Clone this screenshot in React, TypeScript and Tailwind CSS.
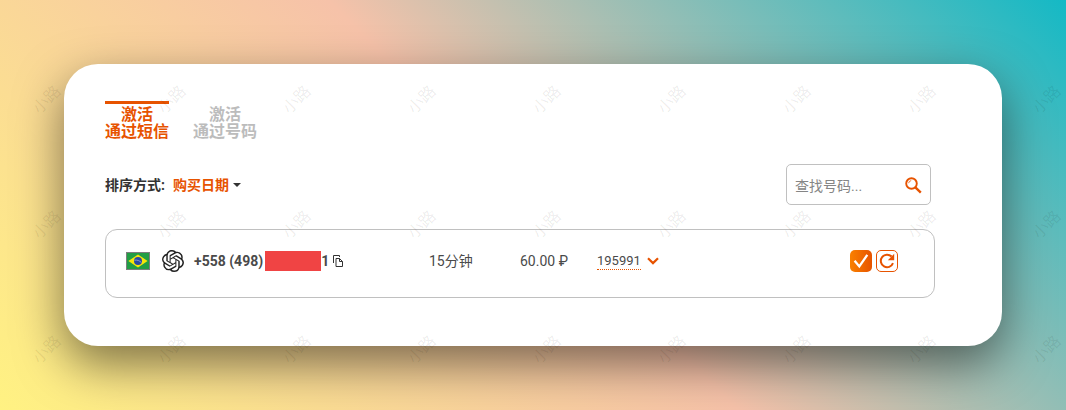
import { useState } from "react";
import { SiOpenai } from "react-icons/si";

const tabs = [
  { id: "sms", top: "激活", bottom: "通过短信" },
  { id: "number", top: "激活", bottom: "通过号码" },
];

const activations = [
  {
    id: "195991",
    prefix: "+558 (498)",
    suffix: "1",
    time: "15分钟",
    price: "60.00 ₽",
  },
];

const BrazilFlag = () => (
  <svg width="24" height="18" viewBox="0 0 24 18" role="img" aria-label="Brazil">
    <rect width="24" height="18" fill="#7d7d7d" />
    <rect x="1" y="1" width="22" height="16" fill="#229e45" />
    <path d="M12 2.6 21.6 9 12 15.4 2.4 9z" fill="#f8e509" />
    <circle cx="12" cy="9" r="4" fill="#2b49a3" />
    <path d="M8.4 8.2c2.8-.4 5.2.4 7 2.4" stroke="#a9bcdc" strokeWidth="0.7" fill="none" />
  </svg>
);

const SearchIcon = () => (
  <svg width="17" height="17" viewBox="0 0 17 17" fill="none" stroke="#e75300">
    <circle cx="6.5" cy="6.5" r="5.3" strokeWidth="1.9" />
    <path d="M3.6 6.2a3 3 0 0 1 2.6-2.6" strokeWidth="0.8" />
    <path d="m10.4 10.4 5.4 5.2" strokeWidth="2.4" />
  </svg>
);

const CopyIcon = () => (
  <svg width="10" height="12" viewBox="0 0 10 12" fill="none" stroke="#333" strokeWidth="1">
    <path d="M.5 8V.5h6V2" />
    <path d="M3 3.5h3.5l3 3v5H3z" />
    <path d="M6.5 3.5v3h3" />
  </svg>
);

const ChevronIcon = () => (
  <svg width="12" height="8" viewBox="0 0 12 8" fill="none" stroke="#e75300" strokeWidth="2.2">
    <path d="m1 1.2 5 4.9 5-4.9" />
  </svg>
);

const CheckIcon = () => (
  <svg width="22" height="22" viewBox="0 0 22 22" fill="none" stroke="#fff" strokeWidth="2.3">
    <path d="m4.6 10.8 4.7 5.6 8-11.6" />
  </svg>
);

const RefreshIcon = () => (
  <svg width="20" height="20" viewBox="0 0 20 20" fill="none">
    <path d="M16 12.2a6.3 6.3 0 1 1-1.4-6.7" stroke="#e75300" strokeWidth="2" />
    <path d="M17.2 2.8v6.4h-6.4z" fill="#e75300" />
  </svg>
);

// Repeated diagonal text over the whole page
const Watermark = () => (
  <div
    aria-hidden="true"
    className="pointer-events-none absolute inset-0 grid auto-rows-[125px] grid-cols-[repeat(9,125px)] overflow-hidden"
  >
    {Array.from({ length: 9 * 3 }, (_, i) => (
      <div key={i} className="pt-[88px] pl-[31px]">
        <span className="block w-8 -rotate-45 text-base whitespace-nowrap text-black/8">小路</span>
      </div>
    ))}
  </div>
);

const App = () => {
  const [activeTab, setActiveTab] = useState("sms");
  const [query, setQuery] = useState("");

  return (
    <div className="relative min-h-screen overflow-hidden bg-[linear-gradient(45deg,#fff282_0%,#f6c2a9_50%,#14b9c5_100%)] p-16 font-['Roboto','Noto_Sans_CJK_SC',sans-serif] text-sm text-[#4a4a4a]">
      <main className="rounded-[34px] bg-white pt-[37px] pr-[67px] pb-12 pl-[41px] shadow-[0_18px_48px_rgba(0,0,0,0.5)]">
        {/* Tabs */}
        <div className="flex gap-6">
          {tabs.map((tab) => (
            <button
              key={tab.id}
              onClick={() => setActiveTab(tab.id)}
              className={`border-t-3 pt-0.5 text-center text-base leading-[17px] font-bold ${
                activeTab === tab.id
                  ? "border-[#e75300] text-[#e75300]"
                  : "border-transparent text-[#bcbcbc]"
              }`}
            >
              {tab.top}
              <br />
              {tab.bottom}
            </button>
          ))}
        </div>

        {/* Sorting and search */}
        <div className="mt-6 flex items-center justify-between pr-1">
          <div className="flex items-center gap-2 font-bold">
            <label htmlFor="sort" className="text-[#333]">
              排序方式:
            </label>
            <div className="relative">
              <select id="sort" className="appearance-none pr-3 text-[#e75300] outline-none">
                <option>购买日期</option>
              </select>
              <svg
                width="8"
                height="4"
                viewBox="0 0 8 4"
                className="pointer-events-none absolute top-2 right-0"
              >
                <path d="M0 0h8L4 4z" fill="#333" />
              </svg>
            </div>
          </div>
          <div className="flex h-[41px] w-[145px] items-center rounded-[5px] border border-[#c0c0c0] px-2 pt-0.5">
            <input
              type="text"
              aria-label="查找号码"
              placeholder="查找号码..."
              value={query}
              onChange={(e) => setQuery(e.target.value)}
              className="min-w-0 flex-1 outline-none placeholder:text-[#858585]"
            />
            <button aria-label="搜索">
              <SearchIcon />
            </button>
          </div>
        </div>

        {/* Activations */}
        <ul className="mt-6">
          {activations.map((item) => (
            <li
              key={item.id}
              className="grid grid-cols-[303fr_91fr_77fr_301fr] items-center rounded-xl border border-[#c0c0c0] pt-5 pr-9 pb-[25px] pl-5"
            >
              <div className="flex items-center">
                <BrazilFlag />
                <SiOpenai className="ml-3 size-[22px] text-[#222]" />
                <span className="ml-2.5 flex items-center font-bold">
                  {item.prefix}
                  <span className="ml-0.5 h-5 w-14 bg-[#f04444]" />
                  {item.suffix}
                </span>
                <button aria-label="复制" className="ml-1">
                  <CopyIcon />
                </button>
              </div>
              <span>{item.time}</span>
              <span>{item.price}</span>
              <div className="flex items-center justify-between">
                <button className="flex items-center gap-1.5 text-[13px]">
                  <span className="border-b border-dotted border-[#e75300] leading-4">{item.id}</span>
                  <ChevronIcon />
                </button>
                <div className="flex gap-1">
                  <button
                    aria-label="完成"
                    className="size-[22px] rounded-[5px] bg-linear-to-r from-[#f98000] to-[#e75300]"
                  >
                    <CheckIcon />
                  </button>
                  <button aria-label="刷新" className="size-[22px] rounded-[5px] border border-[#e75300]">
                    <RefreshIcon />
                  </button>
                </div>
              </div>
            </li>
          ))}
        </ul>
      </main>
      <Watermark />
    </div>
  );
};

export default App;
